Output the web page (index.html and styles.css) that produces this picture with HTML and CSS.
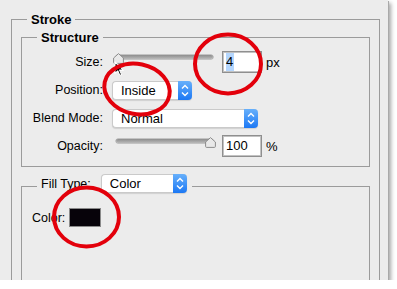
FILE: index.html
```html
<!DOCTYPE html>
<html lang="en">
<head>
    <meta charset="UTF-8">
    <title>Layer Style - Stroke</title>
    <link rel="stylesheet" href="styles.css">
</head>
<body>

    <div class="panel">
        <fieldset class="group outer">
            <legend class="title">Stroke</legend>

            <!-- Structure -->
            <fieldset class="group structure">
                <legend class="title">Structure</legend>

                <div class="row">
                    <span class="label">Size:</span>
                    <div class="control">
                        <div class="slider thumb-start">
                            <div class="track"></div>
                            <svg class="thumb" width="11" height="11" viewBox="0 0 11 11"><path d="M5.5 0.6 L10.4 5 V9.4 Q10.4 10.4 9.4 10.4 H1.6 Q0.6 10.4 0.6 9.4 V5 Z" fill="#e9e9e9" stroke="#8c8c8c"/></svg>
                        </div>
                        <span class="field"><span class="selected">4</span></span>
                        <span class="unit">px</span>
                    </div>
                </div>

                <div class="row">
                    <span class="label">Position:</span>
                    <div class="control">
                        <div class="select select-position">
                            <span class="select-text">Inside</span>
                            <span class="stepper"><svg width="14" height="19" viewBox="0 0 14 19"><path d="M4 7.5 L7 4.5 L10 7.5 M4 11.5 L7 14.5 L10 11.5" fill="none" stroke="#fff" stroke-width="1.4"/></svg></span>
                        </div>
                    </div>
                </div>

                <div class="row">
                    <span class="label">Blend Mode:</span>
                    <div class="control">
                        <div class="select select-blend">
                            <span class="select-text">Normal</span>
                            <span class="stepper"><svg width="14" height="19" viewBox="0 0 14 19"><path d="M4 7.5 L7 4.5 L10 7.5 M4 11.5 L7 14.5 L10 11.5" fill="none" stroke="#fff" stroke-width="1.4"/></svg></span>
                        </div>
                    </div>
                </div>

                <div class="row">
                    <span class="label">Opacity:</span>
                    <div class="control">
                        <div class="slider thumb-end">
                            <div class="track"></div>
                            <svg class="thumb" width="11" height="11" viewBox="0 0 11 11"><path d="M5.5 0.6 L10.4 5 V9.4 Q10.4 10.4 9.4 10.4 H1.6 Q0.6 10.4 0.6 9.4 V5 Z" fill="#e9e9e9" stroke="#8c8c8c"/></svg>
                        </div>
                        <span class="field">100</span>
                        <span class="unit">%</span>
                    </div>
                </div>
            </fieldset>

            <!-- Fill Type -->
            <fieldset class="group fill">
                <legend class="fill-title">
                    <span>Fill Type:</span>
                    <div class="select select-fill">
                        <span class="select-text">Color</span>
                        <span class="stepper"><svg width="14" height="19" viewBox="0 0 14 19"><path d="M4 7.5 L7 4.5 L10 7.5 M4 11.5 L7 14.5 L10 11.5" fill="none" stroke="#fff" stroke-width="1.4"/></svg></span>
                    </div>
                </legend>

                <div class="color-row">
                    <span>Color:</span>
                    <span class="swatch"></span>
                </div>
            </fieldset>
        </fieldset>

        <!-- Mouse pointer -->
        <svg class="cursor" width="12" height="16" viewBox="0 0 12 16">
            <path d="M1 1 L1 12.5 L3.8 9.8 L5.8 14.4 L7.6 13.6 L5.6 9.1 L9.4 9.1 Z" fill="#000" stroke="#fff" stroke-width="1.1" stroke-linejoin="round"/>
        </svg>

        <!-- Red marks -->
        <svg class="marks" width="397" height="289" viewBox="0 0 397 289">
            <ellipse cx="228" cy="64" rx="33" ry="29.5" fill="none" stroke="#e3000b" stroke-width="4"/>
            <ellipse cx="137" cy="89" rx="33" ry="25" transform="rotate(12 137 89)" fill="none" stroke="#e3000b" stroke-width="4"/>
            <ellipse cx="86.5" cy="217" rx="32.5" ry="29.5" fill="none" stroke="#e3000b" stroke-width="4"/>
        </svg>
    </div>

</body>
</html>
```

FILE: styles.css
```css
body {
    margin: 0;
    background-color: #ffffff;
    font-family: "Liberation Sans", Arial, sans-serif;
    font-size: 12.5px;
    color: #000;
}

.panel {
    position: relative;
    width: 388px;
    height: 280px;
    padding-top: 12px;
    box-sizing: border-box;
    background-color: #ececec;
    overflow: hidden;
    box-shadow: 1px 1px 0 #a9a9a9, 3px 3px 4px rgba(0, 0, 0, 0.35);
}

.group {
    margin: 0;
    border: 1px solid #9b9b9b;
    min-width: 0;
}

.title {
    font-size: 13px;
    font-weight: bold;
    line-height: 15px;
    padding: 0 4px;
}

.outer {
    width: 369px;
    box-sizing: border-box;
    margin-left: 11px;
    padding: 3px 9px 0;
    height: 400px;
}

.outer > .title {
    margin-left: 6px;
}

.structure {
    padding: 3px 0 6px;
}

.structure > .title {
    margin-left: 15px;
}

.row {
    display: grid;
    grid-template-columns: 81px 1fr;
    column-gap: 9px;
    height: 28px;
    align-items: center;
}

.label {
    text-align: right;
}

.control {
    display: flex;
    align-items: center;
    height: 28px;
}

/* Sliders */
.slider {
    position: relative;
    width: 97px;
    height: 28px;
    margin-left: 4px;
    margin-right: 9px;
}

.track {
    margin-top: 7px;
    height: 4px;
    border-radius: 2px;
    background: linear-gradient(#8d8d8d, #b9b9b9);
    box-shadow: 0 0 0 0.5px #9a9a9a;
}

.thumb {
    position: absolute;
    top: 5px;
}

.thumb-start .thumb {
    left: -3px;
}

.thumb-end .thumb {
    right: -3px;
}

/* Number fields */
.field {
    width: 40px;
    height: 22px;
    box-sizing: border-box;
    border: 1px solid #8f8f8f;
    box-shadow: inset 0 0 0 1px #c2c2c2;
    background-color: #fff;
    padding-left: 3px;
    font-size: 13px;
    line-height: 20px;
}

.selected {
    background-color: #b4d6fd;
    padding: 1px 1px 2px 0;
}

.unit {
    margin-left: 4px;
    font-size: 13px;
}

/* Drop-downs */
.select {
    display: flex;
    height: 19px;
    box-sizing: border-box;
    background-color: #fff;
    border: 1px solid #cacaca;
    border-right: none;
    border-radius: 4px;
    box-shadow: 0 1px 1px rgba(0, 0, 0, 0.12);
}

.select-position {
    width: 80px;
}

.select-blend {
    width: 146px;
}

.select-fill {
    width: 86px;
    margin-left: 10px;
}

.select-text {
    flex: 1;
    padding-left: 8px;
    line-height: 17px;
    font-size: 13px;
}

.stepper {
    width: 14px;
    height: 19px;
    margin-top: -1px;
    border-radius: 0 4px 4px 0;
    background: linear-gradient(#67b0fb, #1c78f4);
}

.stepper svg {
    display: block;
}

/* Fill type */
.fill {
    margin-top: 7px;
    padding: 9px 0 0;
    height: 200px;
}

.fill-title {
    display: flex;
    align-items: center;
    margin-left: 15px;
    padding: 0 5px 6px 4px;
}

.color-row {
    display: flex;
    align-items: center;
    padding-left: 10px;
}

.swatch {
    width: 32px;
    height: 19px;
    box-sizing: border-box;
    margin-left: 4px;
    background-color: #07030a;
    border: 1px solid #8a8a8a;
}

/* Overlays */
.cursor {
    position: absolute;
    left: 114px;
    top: 61px;
}

.marks {
    position: absolute;
    left: 0;
    top: 0;
    pointer-events: none;
}
```
